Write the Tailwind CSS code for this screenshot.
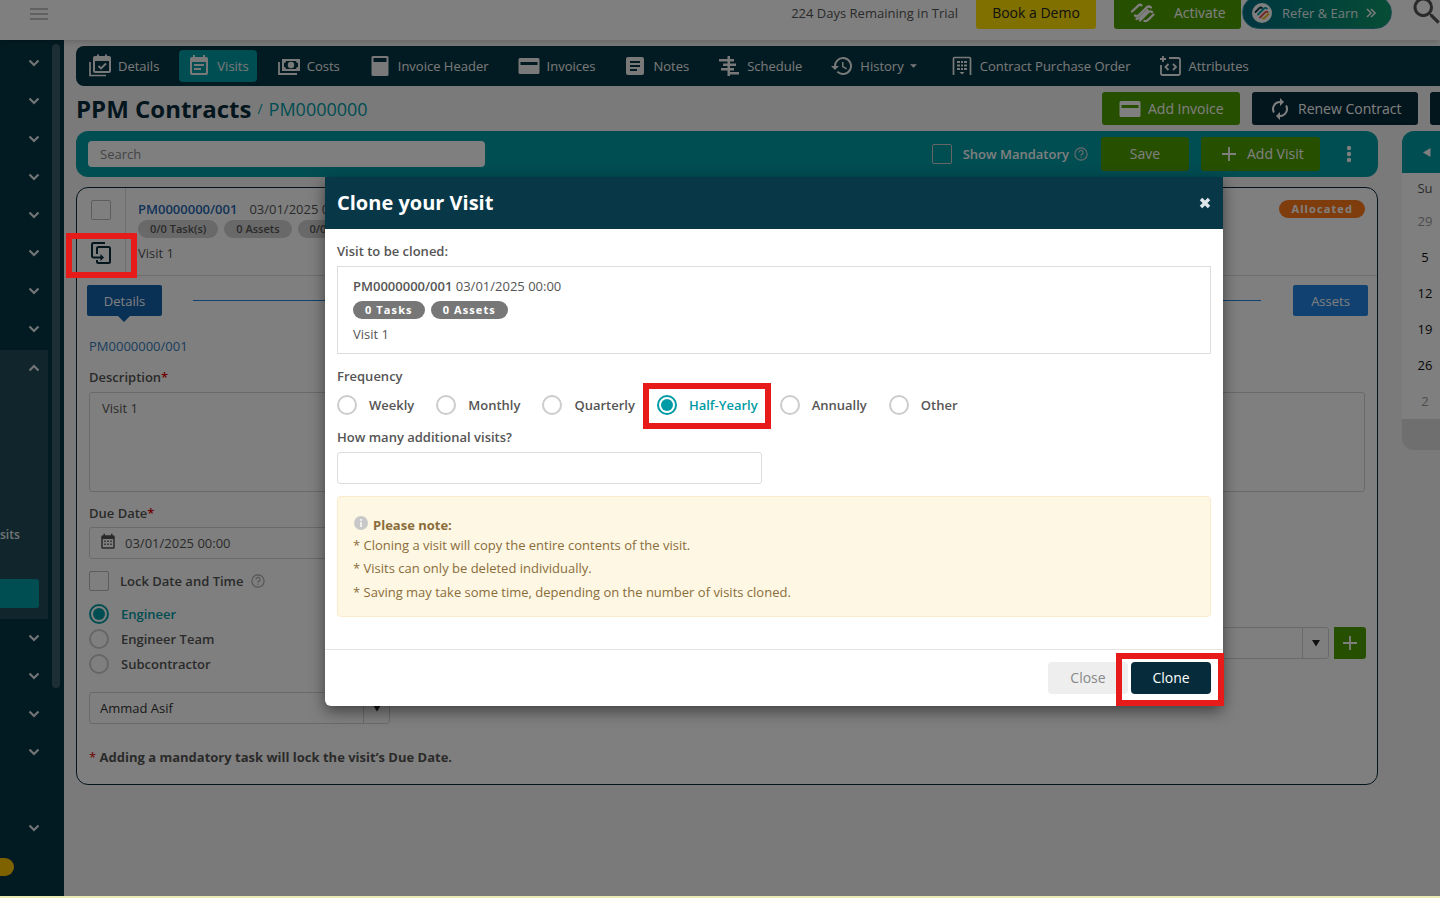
<!DOCTYPE html>
<html lang="en">
<head>
<meta charset="utf-8">
<title>PPM Contracts - Clone your Visit</title>
<script src="https://cdn.jsdelivr.net/npm/@tailwindcss/browser@4"></script>
</head>
<body class="flex min-h-screen flex-col overflow-x-hidden bg-[#eaedb6] font-['Open_Sans',sans-serif] text-[13px] leading-5 text-[#555]">
<svg class="hidden" aria-hidden="true">
  <symbol id="chev" viewBox="0 0 12 8"><path d="M1.5 1.5 6 6l4.500-4.500" fill="none" stroke="currentColor" stroke-width="2.200"/></symbol>
  <symbol id="invoice" viewBox="0 0 24 24"><path fill="currentColor" fill-rule="evenodd" d="M3 4h18a1.500 1.500 0 0 1 1.500 1.500v13A1.500 1.500 0 0 1 21 20H3a1.500 1.500 0 0 1-1.500-1.500v-13A1.500 1.500 0 0 1 3 4Zm.5 4v3h17V8Z"/></symbol>
  <symbol id="help" viewBox="0 0 24 24"><circle cx="12" cy="12" r="10.500" fill="none" stroke="currentColor" stroke-width="2"/><path d="M8.500 9.500a3.500 3.500 0 1 1 5 3.100c-1 .6-1.500 1.200-1.500 2.400" fill="none" stroke="currentColor" stroke-width="2"/><path fill="currentColor" d="M11 16.500h2v2h-2z"/></symbol>
  <symbol id="plus" viewBox="0 0 16 16"><path d="M8 1v14M1 8h14" stroke="currentColor" stroke-width="1.800"/></symbol>
  <symbol id="caret" viewBox="0 0 10 8"><path d="M1 1h8L5 7.500Z" fill="currentColor"/></symbol>
</svg>

<div class="relative mb-[2px] flex flex-1 flex-col overflow-hidden bg-[#f5f5f5]">
  <header class="relative z-10 flex h-10 items-end overflow-hidden bg-white pb-[11px] pl-[30px] shadow-md">
    <button aria-label="Toggle menu" class="mb-[9px] text-[#b0b0b0]"><svg class="h-3 w-[18px]" viewBox="0 0 18 12"><path d="M0 1h18M0 6h18M0 11h18" stroke="currentColor" stroke-width="1.600"/></svg></button>
    <span class="mb-[6px] ml-auto">224 Days Remaining in Trial</span>
    <button class="ml-[18px] h-[33px] w-[120px] rounded-[3px] bg-[#ffe100] text-sm text-[#222]">Book a Demo</button>
    <button class="ml-[18px] flex h-[33px] w-[127px] items-center rounded-[3px] bg-[#4f9e00] pl-4 text-sm text-white">
      <svg class="mr-[18px] h-5 w-[26px]" viewBox="0 0 25 20" fill="none" stroke="currentColor" stroke-width="2.300" stroke-linecap="round"><path d="M1.500 8.500 7.500 2.800q2-1.800 3.500-.5M4.500 12.500q2 1.500 4-.5l7.500-7.500q2.500-2 4.500 0M6 16l1-.5q1.500 0 2.500-1l7.500-7.500M9.500 17.500 17 10q2.500-2.500 4.500-1M14 18q2 .5 3.500-1l5.500-5.500"/></svg>Activate</button>
    <button class="ml-px flex h-[33px] w-[150px] items-center rounded-full border border-[#2a93a0] bg-linear-to-r from-[#046c80] to-[#0f9a68] pl-[9px] text-[#e8f4f4]">
      <svg class="mr-[10px] size-5" viewBox="0 0 20 20" fill="none" stroke-width="1.800" stroke-linecap="round"><circle cx="10" cy="10" r="10" fill="#fff"/><path d="m3.500 9 4-4q1.500-1 2.500 0" stroke="#083848"/><path d="m6 11.500 6-6q1.500-1.200 3 0" stroke="#009ba5"/><path d="m8 14.500 5-5q1.500-1.500 2.500-.5" stroke="#e84c4c"/><path d="M11 15.500q1 0 2-1l3.500-3.500" stroke="#f5b91e"/></svg>Refer &amp; Earn
      <svg class="ml-2 size-[10px]" viewBox="0 0 10 10" fill="none" stroke="currentColor" stroke-width="1.600"><path d="m1 1 4 4-4 4M5 1l4 4-4 4"/></svg></button>
    <button aria-label="Search" class="ml-[17px] w-[31px] overflow-hidden text-[#555]"><svg class="size-9" viewBox="0 0 24 24"><path fill="currentColor" d="M9.500 3A6.500 6.500 0 0 1 16 9.500c0 1.610-.59 3.090-1.560 4.230l.27.27h.79l5 5-1.500 1.500-5-5v-.79l-.27-.27A6.500 6.500 0 1 1 9.500 3m0 2a4.500 4.500 0 1 0 0 9 4.500 4.500 0 0 0 0-9"/></svg></button>
  </header>

  <div class="flex flex-1">
    <nav aria-label="Main menu" class="flex w-16 shrink-0 justify-between bg-[#053744] pr-1 text-[#e4e8ea]">
      <div class="w-12 pt-1">
        <button aria-label="Menu section 1" class="flex h-[38px] w-full items-center pl-7"><svg class="h-2 w-3"><use href="#chev"/></svg></button>
        <button aria-label="Menu section 2" class="flex h-[38px] w-full items-center pl-7"><svg class="h-2 w-3"><use href="#chev"/></svg></button>
        <button aria-label="Menu section 3" class="flex h-[38px] w-full items-center pl-7"><svg class="h-2 w-3"><use href="#chev"/></svg></button>
        <button aria-label="Menu section 4" class="flex h-[38px] w-full items-center pl-7"><svg class="h-2 w-3"><use href="#chev"/></svg></button>
        <button aria-label="Menu section 5" class="flex h-[38px] w-full items-center pl-7"><svg class="h-2 w-3"><use href="#chev"/></svg></button>
        <button aria-label="Menu section 6" class="flex h-[38px] w-full items-center pl-7"><svg class="h-2 w-3"><use href="#chev"/></svg></button>
        <button aria-label="Menu section 7" class="flex h-[38px] w-full items-center pl-7"><svg class="h-2 w-3"><use href="#chev"/></svg></button>
        <button aria-label="Menu section 8" class="flex h-[38px] w-full items-center pl-7"><svg class="h-2 w-3"><use href="#chev"/></svg></button>
        <div class="mt-[2px] h-[269px] rounded-r-[2px] bg-[#214d59]">
          <button aria-label="Menu section 9" class="flex h-9 w-full items-center pl-7"><svg class="h-2 w-3 rotate-180"><use href="#chev"/></svg></button>
          <a href="#" class="mt-[139px] block text-xs leading-5 font-semibold">sits</a>
          <a href="#" aria-label="Contracts" class="mt-[34px] block h-[29px] w-[39px] rounded-r-[3px] bg-[#009ba5]"></a>
        </div>
        <button aria-label="Menu section 10" class="flex h-[38px] w-full items-center pl-7"><svg class="h-2 w-3"><use href="#chev"/></svg></button>
        <button aria-label="Menu section 11" class="flex h-[38px] w-full items-center pl-7"><svg class="h-2 w-3"><use href="#chev"/></svg></button>
        <button aria-label="Menu section 12" class="flex h-[38px] w-full items-center pl-7"><svg class="h-2 w-3"><use href="#chev"/></svg></button>
        <button aria-label="Menu section 13" class="flex h-[38px] w-full items-center pl-7"><svg class="h-2 w-3"><use href="#chev"/></svg></button>
        <button aria-label="Menu section 14" class="mt-[38px] flex h-[38px] w-full items-center pl-7"><svg class="h-2 w-3"><use href="#chev"/></svg></button>
        <div class="mt-[11px] h-[18px] w-[14px] rounded-r-full bg-[#ffc400]"></div>
      </div>
      <div class="mt-1 h-[644px] w-2 rounded-full bg-[#3b5e68]"></div>
    </nav>

    <main class="min-w-0 flex-1 pt-[6px] pl-3">
      <nav aria-label="Contract sections" class="flex h-10 items-center gap-3 rounded-l-lg bg-[#053744] pl-1 whitespace-nowrap text-[#f2f2f2]">
        <a href="#" class="flex h-8 items-center gap-[6px] rounded px-2"><svg class="size-6" viewBox="0 0 24 24"><path d="M2 8v13.500h16" fill="none" stroke="currentColor" stroke-width="1.700"/><path fill="currentColor" fill-rule="evenodd" d="M7 2h2V.5h2V2h6V.5h2V2h2a2 2 0 0 1 2 2v13a2 2 0 0 1-2 2H7a2 2 0 0 1-2-2V4a2 2 0 0 1 2-2Zm0 5v10h14V7Z"/><path d="m10.500 12 2.500 2.500 5-5" fill="none" stroke="currentColor" stroke-width="1.800"/></svg>Details</a>
        <a href="#" class="flex h-8 items-center gap-[6px] rounded bg-[#009ba5] px-2"><svg class="size-6" viewBox="0 0 24 24"><path fill="currentColor" d="M14 14H7v2h7m5 3H5V8h14m0-5h-1V1h-2v2H8V1H6v2H5a2 2 0 0 0-2 2v14a2 2 0 0 0 2 2h14a2 2 0 0 0 2-2V5a2 2 0 0 0-2-2m-2 7H7v2h10z"/></svg>Visits</a>
        <a href="#" class="flex h-8 items-center gap-[6px] rounded px-2"><svg class="size-6" viewBox="0 0 24 24"><path d="M2 8v12h18" fill="none" stroke="currentColor" stroke-width="1.800"/><path fill="currentColor" fill-rule="evenodd" d="M5 5h18v12H5Zm4 2a2 2 0 0 1-2 2v4a2 2 0 0 1 2 2h10a2 2 0 0 1 2-2V9a2 2 0 0 1-2-2Z"/><circle cx="14" cy="11" r="3.200" fill="currentColor"/></svg>Costs</a>
        <a href="#" class="flex h-8 items-center gap-[6px] rounded px-2"><svg class="size-6" viewBox="0 0 24 24"><path fill="currentColor" fill-rule="evenodd" d="M5 2h14a1.500 1.500 0 0 1 1.500 1.500v17A1.500 1.500 0 0 1 19 22H5a1.500 1.500 0 0 1-1.500-1.500v-17A1.500 1.500 0 0 1 5 2Zm.5 2v4h13V4Z"/></svg>Invoice Header</a>
        <a href="#" class="flex h-8 items-center gap-[6px] rounded px-2"><svg class="size-6"><use href="#invoice"/></svg>Invoices</a>
        <a href="#" class="flex h-8 items-center gap-[6px] rounded px-2"><svg class="size-6" viewBox="0 0 24 24"><path fill="currentColor" d="M14 17H7v-2h7m3-2H7v-2h10m0-2H7V7h10m2-4H5a2 2 0 0 0-2 2v14a2 2 0 0 0 2 2h14a2 2 0 0 0 2-2V5a2 2 0 0 0-2-2"/></svg>Notes</a>
        <a href="#" class="flex h-8 items-center gap-[6px] rounded px-2"><svg class="size-6" viewBox="0 0 24 24"><path fill="currentColor" d="M10.500 2h2.500v20h-2.500zM2 5h9v2.500H2zM6 9.500h5V12H6zM4 14h7v2.500H4zM13 5h4v2.500h-4zM13 9.500h6V12h-6zM13 14h4v2.500h-4zM13 18h9v2.500h-9z"/></svg>Schedule</a>
        <a href="#" class="flex h-8 items-center gap-[6px] rounded px-2"><svg class="size-6" viewBox="0 0 24 24"><path fill="currentColor" d="M13.500 8H12v5l4.280 2.540.72-1.210-3.500-2.080zM13 3a9 9 0 0 0-9 9H1l3.960 4.030L9 12H6a7 7 0 1 1 2.060 4.940l-1.420 1.420A9 9 0 1 0 13 3"/></svg>History<svg class="mr-[5px] h-1 w-[7px]" viewBox="0 0 8 4"><path d="M0 0h8L4 4Z" fill="currentColor"/></svg></a>
        <a href="#" class="flex h-8 items-center gap-[6px] rounded px-2"><svg class="size-6" viewBox="0 0 24 24"><path d="M3.500 21V4.500A1 1 0 0 1 4.500 3.500h15a1 1 0 0 1 1 1V21" fill="none" stroke="currentColor" stroke-width="1.700"/><path fill="currentColor" d="M7 7h3v2H7zM11 7h2v2h-2zM14 7h3v2h-3zM7 10.500h3v2H7zM11 10.500h2v2h-2zM14 10.500h3v2h-3zM7 14h3v2H7zM11 14h2v2h-2zM14 14h3v2h-3zM9.500 18h5L12 20.500z"/></svg>Contract Purchase Order</a>
        <a href="#" class="flex h-8 items-center gap-[6px] rounded px-2"><svg class="size-6" viewBox="0 0 24 24" fill="none" stroke="currentColor" stroke-width="1.800"><path d="M5 2v6M2 5h6M11 4h9.500A1.500 1.500 0 0 1 22 5.500v14a1.500 1.500 0 0 1-1.500 1.500h-16A1.500 1.500 0 0 1 3 19.500V11"/><path d="m10.500 10-3 3 3 3M15 10l3 3-3 3"/></svg>Attributes</a>
      </nav>

      <div class="mt-[6px] flex h-[33px] items-center overflow-hidden whitespace-nowrap">
        <h1 class="text-2xl leading-8 font-bold text-[#062b3a]">PPM Contracts</h1>
        <span class="ml-[6px] text-sm text-[#009ba5]">/</span>
        <a href="#" class="ml-[6px] text-lg leading-6 font-medium text-[#009ba5]">PM0000000</a>
        <button class="ml-auto flex h-[33px] w-[138px] shrink-0 items-center rounded-[3px] bg-[#4f9e00] pl-4 text-sm text-white"><svg class="mr-[6px] size-6"><use href="#invoice"/></svg>Add Invoice</button>
        <button class="ml-3 flex h-[33px] w-[166px] shrink-0 items-center rounded-[3px] bg-[#062b3a] pl-4 text-sm text-white"><svg class="mr-[6px] size-6" viewBox="0 0 24 24"><path fill="currentColor" d="M12 6v3l4-4-4-4v3a8 8 0 0 0-6.760 12.260L6.700 14.800A6 6 0 0 1 12 6m6.760 1.740L17.300 9.200A6 6 0 0 1 12 18v-3l-4 4 4 4v-3a8 8 0 0 0 6.760-12.260"/></svg>Renew Contract</button>
        <button aria-label="More actions" class="ml-3 h-[33px] w-[10px] shrink-0 rounded-l-[3px] bg-[#062b3a]"></button>
      </div>

      <div class="mt-[6px] flex gap-6">
        <div class="min-w-0 flex-1">
          <div class="flex h-[46px] items-center rounded-xl bg-[#009ba5] pr-[17px] pl-3 text-white">
            <input type="search" aria-label="Search" placeholder="Search" class="h-[26px] w-[397px] rounded bg-white px-3 placeholder:text-[#888]">
            <input type="checkbox" id="mand" class="ml-auto size-5 appearance-none rounded-[2px] border border-[#ccc]">
            <label for="mand" class="ml-[11px] font-semibold">Show Mandatory</label>
            <svg class="ml-[5px] size-[14px] text-[#d0d8d8]"><use href="#help"/></svg>
            <button class="ml-[13px] h-[34px] w-[88px] rounded-[3px] bg-[#4f9e00] text-sm">Save</button>
            <button class="ml-3 flex h-[34px] w-[119px] items-center rounded-[3px] bg-[#4f9e00] pl-5 text-sm"><svg class="mr-[10px] size-4"><use href="#plus"/></svg>Add Visit</button>
            <button aria-label="More" class="ml-[17px] flex w-6 justify-center"><svg class="h-[18px] w-[6px]" viewBox="0 0 6 18" fill="currentColor"><circle cx="3" cy="3" r="2.200"/><circle cx="3" cy="9" r="2.200"/><circle cx="3" cy="15" r="2.200"/></svg></button>
          </div>

          <section class="mt-[10px] rounded-xl border border-[#062b3a] bg-white">
            <div class="flex h-[88px] border-b border-[#ddd]">
              <div class="flex w-[49px] flex-col items-start border-r border-[#ddd] pt-3 pl-[14px]">
                <input type="checkbox" aria-label="Select visit" class="size-5 appearance-none rounded-[2px] border border-[#bbb]">
                <button aria-label="Clone visit" class="mt-[22px] text-[#062b3a]"><svg class="h-[22px] w-5" viewBox="0 0 20 22" fill="none" stroke="currentColor" stroke-width="2"><path d="M14 1H2.500A1.500 1.500 0 0 0 1 2.500v11.500A1.500 1.500 0 0 0 2.500 15.500H10"/><path d="M6 12V6.500A1.500 1.500 0 0 1 7.500 5h10A1.500 1.500 0 0 1 19 6.500v13a1.500 1.500 0 0 1-1.500 1.500h-10A1.500 1.500 0 0 1 6 19.500V18"/><path d="m9.500 12 3.500 3.500L9.500 19Z" fill="currentColor" stroke="none"/></svg></button>
              </div>
              <div class="min-w-0 flex-1 pt-[11px] pr-3 pl-3">
                <div class="flex"><a href="#" class="font-semibold text-[#1f66b0]">PM0000000/001</a><span class="ml-3">03/01/2025 00:00</span></div>
                <div class="mt-px flex gap-[6px] text-[11px] leading-[18px] font-semibold"><span class="rounded-full bg-[#d2d2d2] px-3">0/0 Task(s)</span><span class="rounded-full bg-[#d2d2d2] px-3">0 Assets</span><span class="rounded-full bg-[#d2d2d2] px-3">0/0 Parts</span></div>
                <p class="mt-[5px]">Visit 1</p>
              </div>
              <span class="mt-3 mr-3 h-[18px] rounded-full bg-[#ff7b1a] px-3 text-[11px] leading-[18px] font-bold tracking-widest text-white">Allocated</span>
            </div>

            <div class="flex items-center pt-[9px] pr-[9px] pl-[10px] text-white">
              <button class="relative h-[31px] w-[75px] rounded-[2px] bg-[#1260ab]">Details<svg class="absolute top-[31px] left-[31px] h-[6px] w-3 text-[#1260ab]" viewBox="0 0 12 6"><path d="M0 0h12L6 6Z" fill="currentColor"/></svg></button>
              <div class="mr-8 ml-[31px] h-px flex-1 bg-[#1f84e0]"></div>
              <button class="h-[31px] w-[75px] rounded-[2px] bg-[#2283e0]">Assets</button>
            </div>

            <div class="px-3 pb-[17px]">
              <a href="#" class="mt-5 block text-[#337ab7]">PM0000000/001</a>
              <label for="desc" class="mt-[11px] block font-semibold">Description<span class="text-[#e00000]">*</span></label>
              <textarea id="desc" class="mt-[5px] block h-[100px] w-full resize-none rounded-[3px] border border-[#d5d5d5] px-3 py-[5px]">Visit 1</textarea>
              <label for="due" class="mt-[11px] block font-semibold">Due Date<span class="text-[#e00000]">*</span></label>
              <div class="mt-1 flex h-8 w-[301px] items-center rounded-[3px] border border-[#d5d5d5] pl-[9px]">
                <svg class="mb-[3px] size-[18px] shrink-0" viewBox="0 0 24 24"><path fill="currentColor" d="M9 10v2H7v-2zm4 0v2h-2v-2zm4 0v2h-2v-2zm2-7a2 2 0 0 1 2 2v14a2 2 0 0 1-2 2H5a2 2 0 0 1-2-2V5a2 2 0 0 1 2-2h1V1h2v2h8V1h2v2zm0 16V8H5v11zM9 14v2H7v-2zm4 0v2h-2v-2zm4 0v2h-2v-2z"/></svg>
                <input id="due" type="text" value="03/01/2025 00:00" class="ml-2 w-40">
              </div>
              <div class="mt-3 flex items-center">
                <input type="checkbox" id="lock" class="size-5 appearance-none rounded-[2px] border border-[#bbb]">
                <label for="lock" class="ml-[11px] font-semibold">Lock Date and Time</label>
                <svg class="ml-[7px] size-[14px] text-[#aaa]"><use href="#help"/></svg>
              </div>
              <div class="mt-[13px] flex items-start justify-between">
                <div class="w-[301px] font-semibold">
                  <div class="flex flex-col gap-[5px]">
                    <label class="flex items-center gap-3 text-[#009ba5]"><input type="radio" name="who" checked class="size-5 appearance-none rounded-full border-2 border-[#009ba5] bg-[#009ba5] bg-clip-content p-[2px]">Engineer</label>
                    <label class="flex items-center gap-3"><input type="radio" name="who" class="size-5 appearance-none rounded-full border-2 border-[#ccc]">Engineer Team</label>
                    <label class="flex items-center gap-3"><input type="radio" name="who" class="size-5 appearance-none rounded-full border-2 border-[#ccc]">Subcontractor</label>
                  </div>
                  <div class="relative mt-[18px]">
                    <select aria-label="Engineer" class="h-8 w-full appearance-none rounded-[3px] border border-[#d5d5d5] px-[10px] font-normal text-[#333]"><option>Ammad Asif</option></select>
                    <span class="pointer-events-none absolute inset-y-0 right-0 flex w-[27px] items-center justify-center border-l border-[#d5d5d5] text-[#222]"><svg class="h-2 w-[10px]"><use href="#caret"/></svg></span>
                  </div>
                </div>
                <div class="-mr-px mt-[23px] flex gap-[5px]">
                  <div class="relative w-[301px]">
                    <select aria-label="Site contact" class="h-8 w-full appearance-none rounded-[3px] border border-[#d5d5d5] px-[10px]"><option></option></select>
                    <span class="pointer-events-none absolute inset-y-0 right-0 flex w-[27px] items-center justify-center border-l border-[#d5d5d5] text-[#222]"><svg class="h-2 w-[10px]"><use href="#caret"/></svg></span>
                  </div>
                  <button aria-label="Add" class="flex size-8 items-center justify-center rounded-r-[3px] bg-[#4f9e00] text-white"><svg class="size-4"><use href="#plus"/></svg></button>
                </div>
              </div>
              <p class="mt-[23px] font-bold"><span class="font-normal text-[#e00000]">*</span> Adding a mandatory task will lock the visit’s Due Date.</p>
            </div>
          </section>
        </div>

        <aside aria-label="Calendar" class="h-[319px] w-[38px] shrink-0 overflow-hidden rounded-l-xl bg-[#dedede]">
          <div class="flex h-[42px] items-center bg-[#009ba5] pl-[21px] text-white"><button aria-label="Previous month"><svg class="h-[9px] w-2" viewBox="0 0 8 9"><path d="M7.500 0v9L0 4.500Z" fill="currentColor"/></svg></button></div>
          <table class="w-[46px] border-collapse bg-white text-center text-[#111]">
            <thead><tr class="h-[30px]"><th class="font-normal text-[#555]">Su</th></tr></thead>
            <tbody>
              <tr class="h-9"><td class="text-[#999]">29</td></tr>
              <tr class="h-9"><td>5</td></tr>
              <tr class="h-9"><td>12</td></tr>
              <tr class="h-9"><td>19</td></tr>
              <tr class="h-9"><td>26</td></tr>
              <tr class="h-9"><td class="text-[#999]">2</td></tr>
            </tbody>
          </table>
        </aside>
      </div>
    </main>
  </div>

  <!-- Dimmed backdrop with the clone dialog -->
  <div class="absolute inset-0 z-20 flex items-start bg-black/50 pt-[177px] pr-[217px] pl-[325px]">
    <div role="dialog" aria-labelledby="dlg" class="min-w-0 flex-1 rounded-b-md bg-white shadow-[0_5px_15px_rgba(0,0,0,0.5)]">
      <div class="flex h-[52px] items-center justify-between bg-[#083848] px-3">
        <h2 id="dlg" class="text-xl font-bold text-white">Clone your Visit</h2>
        <button aria-label="Close dialog" class="text-[#dfe5e8]"><svg class="size-3" viewBox="0 0 12 12"><path d="m2 2 8 8M10 2l-8 8" stroke="currentColor" stroke-width="3.400"/></svg></button>
      </div>
      <div class="px-3 pt-3 pb-8">
        <p class="font-semibold">Visit to be cloned:</p>
        <div class="mt-[5px] border border-[#ddd] px-[15px] py-[9px]">
          <p><span class="font-semibold">PM0000000/001</span> 03/01/2025 00:00</p>
          <div class="mt-[5px] flex gap-[6px] text-[11px] leading-[18px] font-bold tracking-widest text-white"><span class="rounded-full bg-[#777] px-3">0 Tasks</span><span class="rounded-full bg-[#777] px-3">0 Assets</span></div>
          <p class="mt-[5px]">Visit 1</p>
        </div>
        <fieldset class="mt-3 font-semibold">
          <legend>Frequency</legend>
          <div class="mt-[9px] flex gap-[22px]">
            <label class="flex items-center gap-3"><input type="radio" name="freq" class="size-5 appearance-none rounded-full border-2 border-[#ccc]">Weekly</label>
            <label class="flex items-center gap-3"><input type="radio" name="freq" class="size-5 appearance-none rounded-full border-2 border-[#ccc]">Monthly</label>
            <label class="flex items-center gap-3"><input type="radio" name="freq" class="size-5 appearance-none rounded-full border-2 border-[#ccc]">Quarterly</label>
            <label class="relative flex items-center gap-3 text-[#009ba5]"><input type="radio" name="freq" checked class="size-5 appearance-none rounded-full border-2 border-[#009ba5] bg-[#009ba5] bg-clip-content p-[2px]">Half-Yearly
              <span class="pointer-events-none absolute -top-3 -right-[13px] -bottom-[14px] -left-[14px] border-[6px] border-[#e81b1b]"></span></label>
            <label class="flex items-center gap-3"><input type="radio" name="freq" class="size-5 appearance-none rounded-full border-2 border-[#ccc]">Annually</label>
            <label class="flex items-center gap-3"><input type="radio" name="freq" class="size-5 appearance-none rounded-full border-2 border-[#ccc]">Other</label>
          </div>
        </fieldset>
        <label for="count" class="mt-3 block font-semibold">How many additional visits?</label>
        <input id="count" type="text" class="mt-[5px] block h-8 w-[425px] rounded-[3px] border border-[#ddd] px-3">
        <div class="mt-3 rounded border border-[#faebcc] bg-[#fdf7e3] px-[15px] pt-[18px] pb-[14px] text-[#8a6d3b]">
          <p class="flex items-center"><svg class="mr-1 mb-1 size-4" viewBox="0 0 16 16"><circle cx="8" cy="8" r="7" fill="#c8c8c8"/><path d="M7 4h2v2H7zM7 7h2v5H7z" fill="#eee"/></svg><strong>Please note:</strong></p>
          <p>* Cloning a visit will copy the entire contents of the visit.</p>
          <p class="mt-[3px]">* Visits can only be deleted individually.</p>
          <p class="mt-1">* Saving may take some time, depending on the number of visits cloned.</p>
        </div>
      </div>
      <div class="flex justify-end gap-[3px] border-t border-[#e5e5e5] p-3 text-sm">
        <button class="h-8 w-20 rounded bg-[#eee] text-[#888]">Close</button>
        <button class="relative h-8 w-20 rounded bg-[#062b3a] text-white">Clone<span class="pointer-events-none absolute -top-[9px] -right-[13px] -bottom-3 -left-[15px] border-[6px] border-[#e81b1b]"></span></button>
      </div>
    </div>
    <span class="pointer-events-none absolute top-[233px] left-[66px] h-[45px] w-[71px] border-[6px] border-[#e81b1b]"></span>
  </div>
</div>
</body>
</html>
